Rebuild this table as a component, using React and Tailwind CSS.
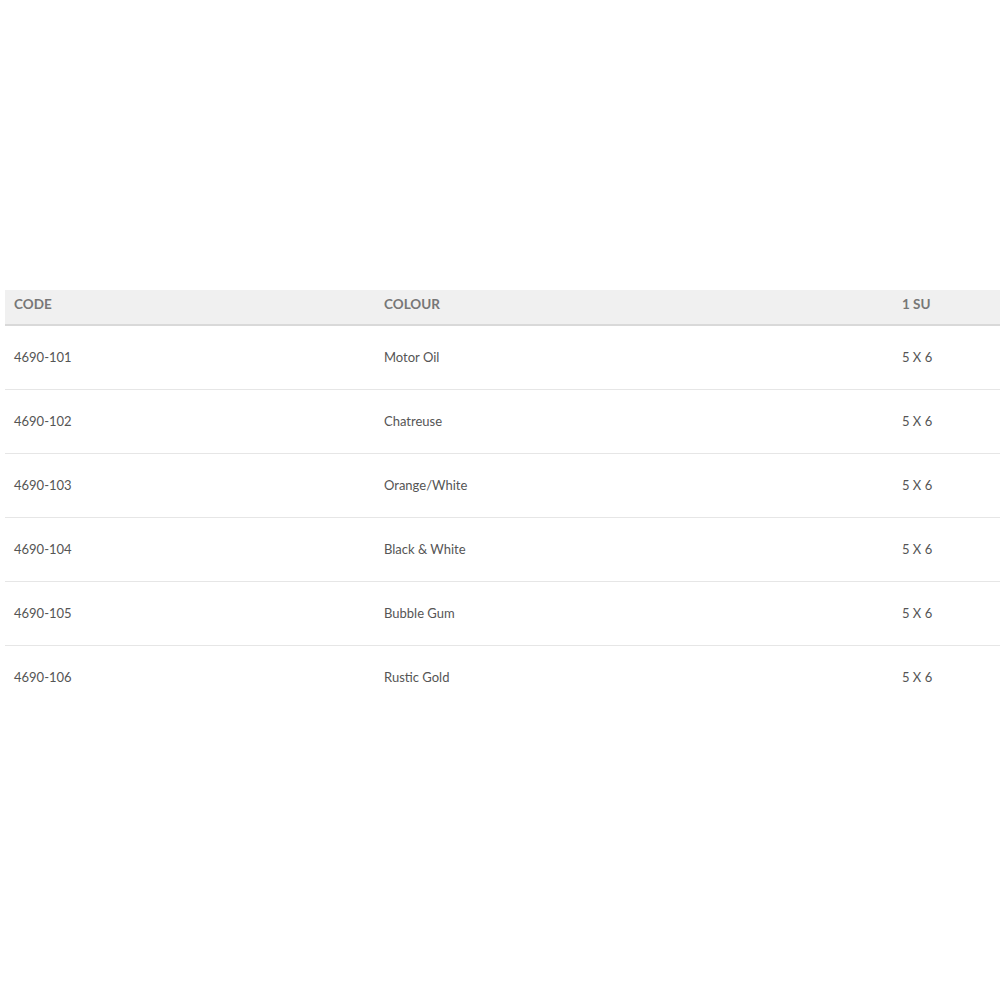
import React from 'react';

const rows = [
  { code: '4690-101', colour: 'Motor Oil', su: '5 X 6' },
  { code: '4690-102', colour: 'Chatreuse', su: '5 X 6' },
  { code: '4690-103', colour: 'Orange/White', su: '5 X 6' },
  { code: '4690-104', colour: 'Black & White', su: '5 X 6' },
  { code: '4690-105', colour: 'Bubble Gum', su: '5 X 6' },
  { code: '4690-106', colour: 'Rustic Gold', su: '5 X 6' },
];

const App = () => {
  return (
    <div className="w-[1000px] h-[1000px] bg-white pt-[290px] pl-[5px] font-['Lato','Open_Sans',sans-serif] text-[13px]">
      <div className="w-[995px]">
        <div className="grid grid-cols-[370px_518px_1fr] h-[36px] bg-[#f0f0f0] border-b-2 border-[#d9d9d9] items-center pb-[6px] text-[13.5px] font-bold text-[#777]">
          <div className="pl-[9px]">CODE</div>
          <div className="pl-[9px]">COLOUR</div>
          <div className="pl-[9px]">1 SU</div>
        </div>
        {rows.map((row, i) => (
          <div
            key={row.code}
            className={`grid grid-cols-[370px_518px_1fr] h-[64px] items-center text-[#555] ${i < rows.length - 1 ? 'border-b border-[#e6e6e6]' : ''}`}
          >
            <div className="pl-[9px]">{row.code}</div>
            <div className="pl-[9px]">{row.colour}</div>
            <div className="pl-[9px]">{row.su}</div>
          </div>
        ))}
      </div>
    </div>
  );
};

export default App;
